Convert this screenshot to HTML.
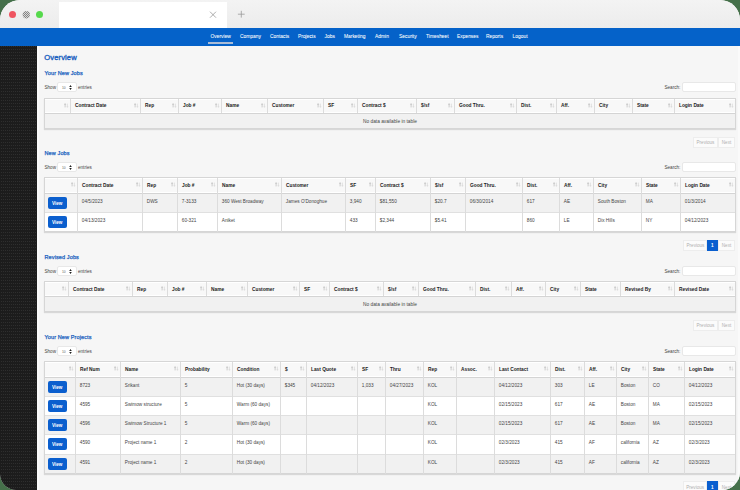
<!DOCTYPE html>
<html><head><meta charset="utf-8"><style>
html,body{margin:0;padding:0;}
body{width:740px;height:490px;overflow:hidden;background:#45704a;position:relative;font-family:"Liberation Sans",sans-serif;}
#win{position:absolute;left:0;top:0;width:740px;height:490px;border-radius:20px 20px 18px 16px;overflow:hidden;background:#f6f6f6;}
.r{position:absolute;}
.t{position:absolute;white-space:nowrap;}
</style></head><body><div id="win">

<div class="r" style="left:0px;top:0px;width:740px;height:28px;background:linear-gradient(#f3f3f3,#ececec)"></div>
<div class="r" style="left:59px;top:2px;width:168px;height:26px;background:#fff"></div>
<div class="r" style="left:9px;top:11px;width:7.3px;height:7.3px;border-radius:50%;background:#ef5561"></div>
<svg class="r" style="left:22px;top:10px" width="9" height="9"><defs><pattern id="chk" width="2" height="2" patternUnits="userSpaceOnUse"><rect width="2" height="2" fill="#d8d8d8"/><rect x="0" y="0" width="1" height="1" fill="#858585"/><rect x="1" y="1" width="1" height="1" fill="#858585"/></pattern></defs><circle cx="4.3" cy="4.7" r="3.7" fill="url(#chk)"/></svg>
<div class="r" style="left:35.8px;top:11px;width:7.3px;height:7.3px;border-radius:50%;background:#56d94c"></div>
<svg class="r" style="left:209px;top:11px" width="8" height="8" viewBox="0 0 8 8"><path d="M1 0.7L7 6.7M7 0.7L1 6.7" stroke="#8a8a8a" stroke-width="0.7"/></svg>
<svg class="r" style="left:237px;top:10px" width="8" height="8" viewBox="0 0 8 8"><path d="M4.3 0.8V7.6M0.9 4.2H7.7" stroke="#999" stroke-width="0.8"/></svg>
<div class="r" style="left:0px;top:28px;width:740px;height:18px;background:#0562c9"></div>
<div class="t" style="left:210.5px;top:32.300000000000004px;height:9.8px;line-height:9.8px;font-size:4.9px;color:#fff;font-weight:normal;-webkit-text-stroke:0.05px #fff;transform:scaleY(1.12)">Overview</div>
<div class="t" style="left:240px;top:32.300000000000004px;height:9.8px;line-height:9.8px;font-size:4.9px;color:#fff;font-weight:normal;-webkit-text-stroke:0.05px #fff;transform:scaleY(1.12)">Company</div>
<div class="t" style="left:270px;top:32.300000000000004px;height:9.8px;line-height:9.8px;font-size:4.9px;color:#fff;font-weight:normal;-webkit-text-stroke:0.05px #fff;transform:scaleY(1.12)">Contacts</div>
<div class="t" style="left:298px;top:32.300000000000004px;height:9.8px;line-height:9.8px;font-size:4.9px;color:#fff;font-weight:normal;-webkit-text-stroke:0.05px #fff;transform:scaleY(1.12)">Projects</div>
<div class="t" style="left:324.5px;top:32.300000000000004px;height:9.8px;line-height:9.8px;font-size:4.9px;color:#fff;font-weight:normal;-webkit-text-stroke:0.05px #fff;transform:scaleY(1.12)">Jobs</div>
<div class="t" style="left:344px;top:32.300000000000004px;height:9.8px;line-height:9.8px;font-size:4.9px;color:#fff;font-weight:normal;-webkit-text-stroke:0.05px #fff;transform:scaleY(1.12)">Marketing</div>
<div class="t" style="left:375px;top:32.300000000000004px;height:9.8px;line-height:9.8px;font-size:4.9px;color:#fff;font-weight:normal;-webkit-text-stroke:0.05px #fff;transform:scaleY(1.12)">Admin</div>
<div class="t" style="left:399px;top:32.300000000000004px;height:9.8px;line-height:9.8px;font-size:4.9px;color:#fff;font-weight:normal;-webkit-text-stroke:0.05px #fff;transform:scaleY(1.12)">Security</div>
<div class="t" style="left:426px;top:32.300000000000004px;height:9.8px;line-height:9.8px;font-size:4.9px;color:#fff;font-weight:normal;-webkit-text-stroke:0.05px #fff;transform:scaleY(1.12)">Timesheet</div>
<div class="t" style="left:457px;top:32.300000000000004px;height:9.8px;line-height:9.8px;font-size:4.9px;color:#fff;font-weight:normal;-webkit-text-stroke:0.05px #fff;transform:scaleY(1.12)">Expenses</div>
<div class="t" style="left:486px;top:32.300000000000004px;height:9.8px;line-height:9.8px;font-size:4.9px;color:#fff;font-weight:normal;-webkit-text-stroke:0.05px #fff;transform:scaleY(1.12)">Reports</div>
<div class="t" style="left:512.6px;top:32.300000000000004px;height:9.8px;line-height:9.8px;font-size:4.9px;color:#fff;font-weight:normal;-webkit-text-stroke:0.05px #fff;transform:scaleY(1.12)">Logout</div>
<div class="r" style="left:208px;top:42px;width:25px;height:2px;background:#aabcd6"></div>
<svg class="r" style="left:0;top:46px" width="37" height="444"><defs><pattern id="dots" width="2" height="3" patternUnits="userSpaceOnUse"><rect width="2" height="3" fill="#1c1c1c"/><rect x="1" y="0" width="1" height="1" fill="#2e2e2e"/></pattern></defs><rect width="37" height="444" fill="url(#dots)"/></svg>
<div class="r" style="left:37px;top:46px;width:2px;height:444px;background:#fafafa"></div>
<div class="r" style="left:738px;top:46px;width:2px;height:444px;background:#fafafa"></div>
<div class="t" style="left:44.3px;top:49.6px;height:15.2px;line-height:15.2px;font-size:7.6px;color:#1a5fc0;font-weight:normal;-webkit-text-stroke:0.35px #1a5fc0;letter-spacing:0.1px">Overview</div>
<div class="t" style="left:44.5px;top:67.7px;height:11.0px;line-height:11.0px;font-size:5.5px;color:#1a62c0;font-weight:normal;-webkit-text-stroke:0.25px #1a62c0;letter-spacing:0.12px">Your New Jobs</div>
<div class="t" style="left:44.5px;top:83.2px;height:9.2px;line-height:9.2px;font-size:4.6px;color:#444;font-weight:normal;">Show</div>
<div class="r" style="left:57px;top:82px;width:20px;height:10px;background:#fff;border:1px solid #e8e8e8;border-radius:2px;box-sizing:border-box"></div>
<div class="t" style="left:62px;top:84.5px;height:6.6px;line-height:6.6px;font-size:3.3px;color:#666;font-weight:normal;">10</div>
<svg class="r" style="left:69px;top:85px" width="3" height="5" viewBox="0 0 3 5"><path d="M1.5 0L2.8 2H0.2Z M1.5 5L2.8 3H0.2Z" fill="#222"/></svg>
<div class="t" style="left:78px;top:83.2px;height:9.2px;line-height:9.2px;font-size:4.6px;color:#444;font-weight:normal;">entries</div>
<div class="t" style="left:664.5px;top:83.2px;height:9.2px;line-height:9.2px;font-size:4.6px;color:#444;font-weight:normal;">Search:</div>
<div class="r" style="left:682px;top:82px;width:54px;height:10px;background:#fff;border:1px solid #e8e8e8;border-radius:2px;box-sizing:border-box"></div>
<div class="r" style="left:44px;top:98px;width:692px;height:31px;background:#f2f2f2;border:1px solid #d6d6d6;box-sizing:border-box;box-shadow:0 1px 1px rgba(0,0,0,0.12)"></div>
<div class="r" style="left:45px;top:99px;width:690px;height:14px;background:#f8f8f8;border-top:1px solid #fff;border-bottom:1px solid #fff;box-sizing:border-box"></div>
<div class="r" style="left:45px;top:113px;width:690px;height:1px;background:#d4d4d4"></div>
<div class="r" style="left:45px;top:114px;width:690px;height:14px;background:#f1f1f1"></div>
<div class="r" style="left:70px;top:99px;width:1px;height:14px;background:#dcdcdc"></div>
<div class="r" style="left:140px;top:99px;width:1px;height:14px;background:#dcdcdc"></div>
<div class="r" style="left:178px;top:99px;width:1px;height:14px;background:#dcdcdc"></div>
<div class="r" style="left:221px;top:99px;width:1px;height:14px;background:#dcdcdc"></div>
<div class="r" style="left:267px;top:99px;width:1px;height:14px;background:#dcdcdc"></div>
<div class="r" style="left:323px;top:99px;width:1px;height:14px;background:#dcdcdc"></div>
<div class="r" style="left:357px;top:99px;width:1px;height:14px;background:#dcdcdc"></div>
<div class="r" style="left:416px;top:99px;width:1px;height:14px;background:#dcdcdc"></div>
<div class="r" style="left:454px;top:99px;width:1px;height:14px;background:#dcdcdc"></div>
<div class="r" style="left:516px;top:99px;width:1px;height:14px;background:#dcdcdc"></div>
<div class="r" style="left:556px;top:99px;width:1px;height:14px;background:#dcdcdc"></div>
<div class="r" style="left:594px;top:99px;width:1px;height:14px;background:#dcdcdc"></div>
<div class="r" style="left:632px;top:99px;width:1px;height:14px;background:#dcdcdc"></div>
<div class="r" style="left:674px;top:99px;width:1px;height:14px;background:#dcdcdc"></div>
<svg class="r" style="left:64px;top:102.8px" width="5" height="5" viewBox="0 0 5 5"><path d="M1.1 4.4V0.8M0.5 1.6L1.1 0.7L1.7 1.6" stroke="#a8a8a8" stroke-width="0.55" fill="none"/><path d="M3.4 0.6V4.2M2.8 3.4L3.4 4.3L4 3.4" stroke="#cfcfcf" stroke-width="0.55" fill="none"/></svg>
<div class="t" style="left:75.0px;top:101.2px;height:9.6px;line-height:9.6px;font-size:4.8px;color:#222;font-weight:bold;">Contract Date</div>
<svg class="r" style="left:134px;top:102.8px" width="5" height="5" viewBox="0 0 5 5"><path d="M1.1 4.4V0.8M0.5 1.6L1.1 0.7L1.7 1.6" stroke="#a8a8a8" stroke-width="0.55" fill="none"/><path d="M3.4 0.6V4.2M2.8 3.4L3.4 4.3L4 3.4" stroke="#cfcfcf" stroke-width="0.55" fill="none"/></svg>
<div class="t" style="left:145.0px;top:101.2px;height:9.6px;line-height:9.6px;font-size:4.8px;color:#222;font-weight:bold;">Rep</div>
<svg class="r" style="left:172px;top:102.8px" width="5" height="5" viewBox="0 0 5 5"><path d="M1.1 4.4V0.8M0.5 1.6L1.1 0.7L1.7 1.6" stroke="#a8a8a8" stroke-width="0.55" fill="none"/><path d="M3.4 0.6V4.2M2.8 3.4L3.4 4.3L4 3.4" stroke="#cfcfcf" stroke-width="0.55" fill="none"/></svg>
<div class="t" style="left:183.0px;top:101.2px;height:9.6px;line-height:9.6px;font-size:4.8px;color:#222;font-weight:bold;">Job #</div>
<svg class="r" style="left:215px;top:102.8px" width="5" height="5" viewBox="0 0 5 5"><path d="M1.1 4.4V0.8M0.5 1.6L1.1 0.7L1.7 1.6" stroke="#a8a8a8" stroke-width="0.55" fill="none"/><path d="M3.4 0.6V4.2M2.8 3.4L3.4 4.3L4 3.4" stroke="#cfcfcf" stroke-width="0.55" fill="none"/></svg>
<div class="t" style="left:226.0px;top:101.2px;height:9.6px;line-height:9.6px;font-size:4.8px;color:#222;font-weight:bold;">Name</div>
<svg class="r" style="left:261px;top:102.8px" width="5" height="5" viewBox="0 0 5 5"><path d="M1.1 4.4V0.8M0.5 1.6L1.1 0.7L1.7 1.6" stroke="#a8a8a8" stroke-width="0.55" fill="none"/><path d="M3.4 0.6V4.2M2.8 3.4L3.4 4.3L4 3.4" stroke="#cfcfcf" stroke-width="0.55" fill="none"/></svg>
<div class="t" style="left:272.0px;top:101.2px;height:9.6px;line-height:9.6px;font-size:4.8px;color:#222;font-weight:bold;">Customer</div>
<svg class="r" style="left:317px;top:102.8px" width="5" height="5" viewBox="0 0 5 5"><path d="M1.1 4.4V0.8M0.5 1.6L1.1 0.7L1.7 1.6" stroke="#a8a8a8" stroke-width="0.55" fill="none"/><path d="M3.4 0.6V4.2M2.8 3.4L3.4 4.3L4 3.4" stroke="#cfcfcf" stroke-width="0.55" fill="none"/></svg>
<div class="t" style="left:328.0px;top:101.2px;height:9.6px;line-height:9.6px;font-size:4.8px;color:#222;font-weight:bold;">SF</div>
<svg class="r" style="left:351px;top:102.8px" width="5" height="5" viewBox="0 0 5 5"><path d="M1.1 4.4V0.8M0.5 1.6L1.1 0.7L1.7 1.6" stroke="#a8a8a8" stroke-width="0.55" fill="none"/><path d="M3.4 0.6V4.2M2.8 3.4L3.4 4.3L4 3.4" stroke="#cfcfcf" stroke-width="0.55" fill="none"/></svg>
<div class="t" style="left:362.0px;top:101.2px;height:9.6px;line-height:9.6px;font-size:4.8px;color:#222;font-weight:bold;">Contract $</div>
<svg class="r" style="left:410px;top:102.8px" width="5" height="5" viewBox="0 0 5 5"><path d="M1.1 4.4V0.8M0.5 1.6L1.1 0.7L1.7 1.6" stroke="#a8a8a8" stroke-width="0.55" fill="none"/><path d="M3.4 0.6V4.2M2.8 3.4L3.4 4.3L4 3.4" stroke="#cfcfcf" stroke-width="0.55" fill="none"/></svg>
<div class="t" style="left:421.0px;top:101.2px;height:9.6px;line-height:9.6px;font-size:4.8px;color:#222;font-weight:bold;">$/sf</div>
<svg class="r" style="left:448px;top:102.8px" width="5" height="5" viewBox="0 0 5 5"><path d="M1.1 4.4V0.8M0.5 1.6L1.1 0.7L1.7 1.6" stroke="#a8a8a8" stroke-width="0.55" fill="none"/><path d="M3.4 0.6V4.2M2.8 3.4L3.4 4.3L4 3.4" stroke="#cfcfcf" stroke-width="0.55" fill="none"/></svg>
<div class="t" style="left:459.0px;top:101.2px;height:9.6px;line-height:9.6px;font-size:4.8px;color:#222;font-weight:bold;">Good Thru.</div>
<svg class="r" style="left:510px;top:102.8px" width="5" height="5" viewBox="0 0 5 5"><path d="M1.1 4.4V0.8M0.5 1.6L1.1 0.7L1.7 1.6" stroke="#a8a8a8" stroke-width="0.55" fill="none"/><path d="M3.4 0.6V4.2M2.8 3.4L3.4 4.3L4 3.4" stroke="#cfcfcf" stroke-width="0.55" fill="none"/></svg>
<div class="t" style="left:521.0px;top:101.2px;height:9.6px;line-height:9.6px;font-size:4.8px;color:#222;font-weight:bold;">Dist.</div>
<svg class="r" style="left:550px;top:102.8px" width="5" height="5" viewBox="0 0 5 5"><path d="M1.1 4.4V0.8M0.5 1.6L1.1 0.7L1.7 1.6" stroke="#a8a8a8" stroke-width="0.55" fill="none"/><path d="M3.4 0.6V4.2M2.8 3.4L3.4 4.3L4 3.4" stroke="#cfcfcf" stroke-width="0.55" fill="none"/></svg>
<div class="t" style="left:561.0px;top:101.2px;height:9.6px;line-height:9.6px;font-size:4.8px;color:#222;font-weight:bold;">Aff.</div>
<svg class="r" style="left:588px;top:102.8px" width="5" height="5" viewBox="0 0 5 5"><path d="M1.1 4.4V0.8M0.5 1.6L1.1 0.7L1.7 1.6" stroke="#a8a8a8" stroke-width="0.55" fill="none"/><path d="M3.4 0.6V4.2M2.8 3.4L3.4 4.3L4 3.4" stroke="#cfcfcf" stroke-width="0.55" fill="none"/></svg>
<div class="t" style="left:599.0px;top:101.2px;height:9.6px;line-height:9.6px;font-size:4.8px;color:#222;font-weight:bold;">City</div>
<svg class="r" style="left:626px;top:102.8px" width="5" height="5" viewBox="0 0 5 5"><path d="M1.1 4.4V0.8M0.5 1.6L1.1 0.7L1.7 1.6" stroke="#a8a8a8" stroke-width="0.55" fill="none"/><path d="M3.4 0.6V4.2M2.8 3.4L3.4 4.3L4 3.4" stroke="#cfcfcf" stroke-width="0.55" fill="none"/></svg>
<div class="t" style="left:637.0px;top:101.2px;height:9.6px;line-height:9.6px;font-size:4.8px;color:#222;font-weight:bold;">State</div>
<svg class="r" style="left:668px;top:102.8px" width="5" height="5" viewBox="0 0 5 5"><path d="M1.1 4.4V0.8M0.5 1.6L1.1 0.7L1.7 1.6" stroke="#a8a8a8" stroke-width="0.55" fill="none"/><path d="M3.4 0.6V4.2M2.8 3.4L3.4 4.3L4 3.4" stroke="#cfcfcf" stroke-width="0.55" fill="none"/></svg>
<div class="t" style="left:679.0px;top:101.2px;height:9.6px;line-height:9.6px;font-size:4.8px;color:#222;font-weight:bold;">Login Date</div>
<svg class="r" style="left:729px;top:102.8px" width="5" height="5" viewBox="0 0 5 5"><path d="M1.1 4.4V0.8M0.5 1.6L1.1 0.7L1.7 1.6" stroke="#a8a8a8" stroke-width="0.55" fill="none"/><path d="M3.4 0.6V4.2M2.8 3.4L3.4 4.3L4 3.4" stroke="#cfcfcf" stroke-width="0.55" fill="none"/></svg>
<div class="t" style="left:363.0px;top:117.0px;height:9.6px;line-height:9.6px;font-size:4.8px;color:#444;font-weight:normal;">No data available in table</div>
<div class="r" style="left:693px;top:137px;width:25px;height:11px;background:#fbfbfb;border:1px solid #ededed;box-sizing:border-box"></div>
<div class="t" style="left:696.5px;top:138.4px;height:9.2px;line-height:9.2px;font-size:4.6px;color:#b0b0b0;font-weight:normal;">Previous</div>
<div class="r" style="left:718px;top:137px;width:17px;height:11px;background:#fbfbfb;border:1px solid #ededed;box-sizing:border-box"></div>
<div class="t" style="left:721.8px;top:138.4px;height:9.2px;line-height:9.2px;font-size:4.6px;color:#b0b0b0;font-weight:normal;">Next</div>
<div class="t" style="left:44.5px;top:148.0px;height:11.0px;line-height:11.0px;font-size:5.5px;color:#1a62c0;font-weight:normal;-webkit-text-stroke:0.25px #1a62c0;letter-spacing:0.12px">New Jobs</div>
<div class="t" style="left:44.5px;top:163.20000000000002px;height:9.2px;line-height:9.2px;font-size:4.6px;color:#444;font-weight:normal;">Show</div>
<div class="r" style="left:57px;top:162px;width:20px;height:10px;background:#fff;border:1px solid #e8e8e8;border-radius:2px;box-sizing:border-box"></div>
<div class="t" style="left:62px;top:164.5px;height:6.6px;line-height:6.6px;font-size:3.3px;color:#666;font-weight:normal;">10</div>
<svg class="r" style="left:69px;top:165px" width="3" height="5" viewBox="0 0 3 5"><path d="M1.5 0L2.8 2H0.2Z M1.5 5L2.8 3H0.2Z" fill="#222"/></svg>
<div class="t" style="left:78px;top:163.20000000000002px;height:9.2px;line-height:9.2px;font-size:4.6px;color:#444;font-weight:normal;">entries</div>
<div class="t" style="left:664.5px;top:163.20000000000002px;height:9.2px;line-height:9.2px;font-size:4.6px;color:#444;font-weight:normal;">Search:</div>
<div class="r" style="left:682px;top:162px;width:54px;height:10px;background:#fff;border:1px solid #e8e8e8;border-radius:2px;box-sizing:border-box"></div>
<div class="r" style="left:44px;top:177px;width:692px;height:55px;background:#f2f2f2;border:1px solid #d6d6d6;box-sizing:border-box;box-shadow:0 1px 1px rgba(0,0,0,0.12)"></div>
<div class="r" style="left:45px;top:178px;width:690px;height:15px;background:#f8f8f8;border-top:1px solid #fff;border-bottom:1px solid #fff;box-sizing:border-box"></div>
<div class="r" style="left:45px;top:193px;width:690px;height:1px;background:#d4d4d4"></div>
<div class="r" style="left:45px;top:194px;width:690px;height:18px;background:#f1f1f1"></div>
<div class="r" style="left:45px;top:212px;width:690px;height:1px;background:#e0e0e0"></div>
<div class="r" style="left:45px;top:213px;width:690px;height:18px;background:#ffffff"></div>
<div class="r" style="left:77px;top:178px;width:1px;height:54px;background:#dcdcdc"></div>
<div class="r" style="left:142px;top:178px;width:1px;height:54px;background:#dcdcdc"></div>
<div class="r" style="left:177px;top:178px;width:1px;height:54px;background:#dcdcdc"></div>
<div class="r" style="left:217px;top:178px;width:1px;height:54px;background:#dcdcdc"></div>
<div class="r" style="left:281px;top:178px;width:1px;height:54px;background:#dcdcdc"></div>
<div class="r" style="left:345px;top:178px;width:1px;height:54px;background:#dcdcdc"></div>
<div class="r" style="left:375px;top:178px;width:1px;height:54px;background:#dcdcdc"></div>
<div class="r" style="left:430px;top:178px;width:1px;height:54px;background:#dcdcdc"></div>
<div class="r" style="left:465px;top:178px;width:1px;height:54px;background:#dcdcdc"></div>
<div class="r" style="left:522px;top:178px;width:1px;height:54px;background:#dcdcdc"></div>
<div class="r" style="left:559px;top:178px;width:1px;height:54px;background:#dcdcdc"></div>
<div class="r" style="left:593px;top:178px;width:1px;height:54px;background:#dcdcdc"></div>
<div class="r" style="left:641px;top:178px;width:1px;height:54px;background:#dcdcdc"></div>
<div class="r" style="left:680px;top:178px;width:1px;height:54px;background:#dcdcdc"></div>
<svg class="r" style="left:71px;top:181.8px" width="5" height="5" viewBox="0 0 5 5"><path d="M1.1 4.4V0.8M0.5 1.6L1.1 0.7L1.7 1.6" stroke="#a8a8a8" stroke-width="0.55" fill="none"/><path d="M3.4 0.6V4.2M2.8 3.4L3.4 4.3L4 3.4" stroke="#cfcfcf" stroke-width="0.55" fill="none"/></svg>
<div class="t" style="left:82.0px;top:180.95px;height:9.6px;line-height:9.6px;font-size:4.8px;color:#222;font-weight:bold;">Contract Date</div>
<svg class="r" style="left:136px;top:181.8px" width="5" height="5" viewBox="0 0 5 5"><path d="M1.1 4.4V0.8M0.5 1.6L1.1 0.7L1.7 1.6" stroke="#a8a8a8" stroke-width="0.55" fill="none"/><path d="M3.4 0.6V4.2M2.8 3.4L3.4 4.3L4 3.4" stroke="#cfcfcf" stroke-width="0.55" fill="none"/></svg>
<div class="t" style="left:147.0px;top:180.95px;height:9.6px;line-height:9.6px;font-size:4.8px;color:#222;font-weight:bold;">Rep</div>
<svg class="r" style="left:171px;top:181.8px" width="5" height="5" viewBox="0 0 5 5"><path d="M1.1 4.4V0.8M0.5 1.6L1.1 0.7L1.7 1.6" stroke="#a8a8a8" stroke-width="0.55" fill="none"/><path d="M3.4 0.6V4.2M2.8 3.4L3.4 4.3L4 3.4" stroke="#cfcfcf" stroke-width="0.55" fill="none"/></svg>
<div class="t" style="left:182.0px;top:180.95px;height:9.6px;line-height:9.6px;font-size:4.8px;color:#222;font-weight:bold;">Job #</div>
<svg class="r" style="left:211px;top:181.8px" width="5" height="5" viewBox="0 0 5 5"><path d="M1.1 4.4V0.8M0.5 1.6L1.1 0.7L1.7 1.6" stroke="#a8a8a8" stroke-width="0.55" fill="none"/><path d="M3.4 0.6V4.2M2.8 3.4L3.4 4.3L4 3.4" stroke="#cfcfcf" stroke-width="0.55" fill="none"/></svg>
<div class="t" style="left:222.0px;top:180.95px;height:9.6px;line-height:9.6px;font-size:4.8px;color:#222;font-weight:bold;">Name</div>
<svg class="r" style="left:275px;top:181.8px" width="5" height="5" viewBox="0 0 5 5"><path d="M1.1 4.4V0.8M0.5 1.6L1.1 0.7L1.7 1.6" stroke="#a8a8a8" stroke-width="0.55" fill="none"/><path d="M3.4 0.6V4.2M2.8 3.4L3.4 4.3L4 3.4" stroke="#cfcfcf" stroke-width="0.55" fill="none"/></svg>
<div class="t" style="left:286.0px;top:180.95px;height:9.6px;line-height:9.6px;font-size:4.8px;color:#222;font-weight:bold;">Customer</div>
<svg class="r" style="left:339px;top:181.8px" width="5" height="5" viewBox="0 0 5 5"><path d="M1.1 4.4V0.8M0.5 1.6L1.1 0.7L1.7 1.6" stroke="#a8a8a8" stroke-width="0.55" fill="none"/><path d="M3.4 0.6V4.2M2.8 3.4L3.4 4.3L4 3.4" stroke="#cfcfcf" stroke-width="0.55" fill="none"/></svg>
<div class="t" style="left:350.0px;top:180.95px;height:9.6px;line-height:9.6px;font-size:4.8px;color:#222;font-weight:bold;">SF</div>
<svg class="r" style="left:369px;top:181.8px" width="5" height="5" viewBox="0 0 5 5"><path d="M1.1 4.4V0.8M0.5 1.6L1.1 0.7L1.7 1.6" stroke="#a8a8a8" stroke-width="0.55" fill="none"/><path d="M3.4 0.6V4.2M2.8 3.4L3.4 4.3L4 3.4" stroke="#cfcfcf" stroke-width="0.55" fill="none"/></svg>
<div class="t" style="left:380.0px;top:180.95px;height:9.6px;line-height:9.6px;font-size:4.8px;color:#222;font-weight:bold;">Contract $</div>
<svg class="r" style="left:424px;top:181.8px" width="5" height="5" viewBox="0 0 5 5"><path d="M1.1 4.4V0.8M0.5 1.6L1.1 0.7L1.7 1.6" stroke="#a8a8a8" stroke-width="0.55" fill="none"/><path d="M3.4 0.6V4.2M2.8 3.4L3.4 4.3L4 3.4" stroke="#cfcfcf" stroke-width="0.55" fill="none"/></svg>
<div class="t" style="left:435.0px;top:180.95px;height:9.6px;line-height:9.6px;font-size:4.8px;color:#222;font-weight:bold;">$/sf</div>
<svg class="r" style="left:459px;top:181.8px" width="5" height="5" viewBox="0 0 5 5"><path d="M1.1 4.4V0.8M0.5 1.6L1.1 0.7L1.7 1.6" stroke="#a8a8a8" stroke-width="0.55" fill="none"/><path d="M3.4 0.6V4.2M2.8 3.4L3.4 4.3L4 3.4" stroke="#cfcfcf" stroke-width="0.55" fill="none"/></svg>
<div class="t" style="left:470.0px;top:180.95px;height:9.6px;line-height:9.6px;font-size:4.8px;color:#222;font-weight:bold;">Good Thru.</div>
<svg class="r" style="left:516px;top:181.8px" width="5" height="5" viewBox="0 0 5 5"><path d="M1.1 4.4V0.8M0.5 1.6L1.1 0.7L1.7 1.6" stroke="#a8a8a8" stroke-width="0.55" fill="none"/><path d="M3.4 0.6V4.2M2.8 3.4L3.4 4.3L4 3.4" stroke="#cfcfcf" stroke-width="0.55" fill="none"/></svg>
<div class="t" style="left:527.0px;top:180.95px;height:9.6px;line-height:9.6px;font-size:4.8px;color:#222;font-weight:bold;">Dist.</div>
<svg class="r" style="left:553px;top:181.8px" width="5" height="5" viewBox="0 0 5 5"><path d="M1.1 4.4V0.8M0.5 1.6L1.1 0.7L1.7 1.6" stroke="#a8a8a8" stroke-width="0.55" fill="none"/><path d="M3.4 0.6V4.2M2.8 3.4L3.4 4.3L4 3.4" stroke="#cfcfcf" stroke-width="0.55" fill="none"/></svg>
<div class="t" style="left:564.0px;top:180.95px;height:9.6px;line-height:9.6px;font-size:4.8px;color:#222;font-weight:bold;">Aff.</div>
<svg class="r" style="left:587px;top:181.8px" width="5" height="5" viewBox="0 0 5 5"><path d="M1.1 4.4V0.8M0.5 1.6L1.1 0.7L1.7 1.6" stroke="#a8a8a8" stroke-width="0.55" fill="none"/><path d="M3.4 0.6V4.2M2.8 3.4L3.4 4.3L4 3.4" stroke="#cfcfcf" stroke-width="0.55" fill="none"/></svg>
<div class="t" style="left:598.0px;top:180.95px;height:9.6px;line-height:9.6px;font-size:4.8px;color:#222;font-weight:bold;">City</div>
<svg class="r" style="left:635px;top:181.8px" width="5" height="5" viewBox="0 0 5 5"><path d="M1.1 4.4V0.8M0.5 1.6L1.1 0.7L1.7 1.6" stroke="#a8a8a8" stroke-width="0.55" fill="none"/><path d="M3.4 0.6V4.2M2.8 3.4L3.4 4.3L4 3.4" stroke="#cfcfcf" stroke-width="0.55" fill="none"/></svg>
<div class="t" style="left:646.0px;top:180.95px;height:9.6px;line-height:9.6px;font-size:4.8px;color:#222;font-weight:bold;">State</div>
<svg class="r" style="left:674px;top:181.8px" width="5" height="5" viewBox="0 0 5 5"><path d="M1.1 4.4V0.8M0.5 1.6L1.1 0.7L1.7 1.6" stroke="#a8a8a8" stroke-width="0.55" fill="none"/><path d="M3.4 0.6V4.2M2.8 3.4L3.4 4.3L4 3.4" stroke="#cfcfcf" stroke-width="0.55" fill="none"/></svg>
<div class="t" style="left:685.0px;top:180.95px;height:9.6px;line-height:9.6px;font-size:4.8px;color:#222;font-weight:bold;">Login Date</div>
<svg class="r" style="left:729px;top:181.8px" width="5" height="5" viewBox="0 0 5 5"><path d="M1.1 4.4V0.8M0.5 1.6L1.1 0.7L1.7 1.6" stroke="#a8a8a8" stroke-width="0.55" fill="none"/><path d="M3.4 0.6V4.2M2.8 3.4L3.4 4.3L4 3.4" stroke="#cfcfcf" stroke-width="0.55" fill="none"/></svg>
<div class="r" style="left:48px;top:197px;width:19px;height:12px;background:#0b5fce;border-radius:2px"></div>
<div class="t" style="left:52px;top:198.6px;height:9.2px;line-height:9.2px;font-size:4.6px;color:#fff;font-weight:bold;transform:scaleY(1.1)">View</div>
<div class="t" style="left:81.8px;top:197.20000000000002px;height:9.4px;line-height:9.4px;font-size:4.7px;color:#444;font-weight:normal;transform:scaleY(1.18)">04/5/2023</div>
<div class="t" style="left:146.8px;top:197.20000000000002px;height:9.4px;line-height:9.4px;font-size:4.7px;color:#444;font-weight:normal;transform:scaleY(1.18)">DWS</div>
<div class="t" style="left:181.8px;top:197.20000000000002px;height:9.4px;line-height:9.4px;font-size:4.7px;color:#444;font-weight:normal;transform:scaleY(1.18)">7-3133</div>
<div class="t" style="left:221.8px;top:197.20000000000002px;height:9.4px;line-height:9.4px;font-size:4.7px;color:#444;font-weight:normal;transform:scaleY(1.18)">360 West Broadway</div>
<div class="t" style="left:285.8px;top:197.20000000000002px;height:9.4px;line-height:9.4px;font-size:4.7px;color:#444;font-weight:normal;transform:scaleY(1.18)">James O'Donoghue</div>
<div class="t" style="left:349.8px;top:197.20000000000002px;height:9.4px;line-height:9.4px;font-size:4.7px;color:#444;font-weight:normal;transform:scaleY(1.18)">3,940</div>
<div class="t" style="left:379.8px;top:197.20000000000002px;height:9.4px;line-height:9.4px;font-size:4.7px;color:#444;font-weight:normal;transform:scaleY(1.18)">$81,550</div>
<div class="t" style="left:434.8px;top:197.20000000000002px;height:9.4px;line-height:9.4px;font-size:4.7px;color:#444;font-weight:normal;transform:scaleY(1.18)">$20.7</div>
<div class="t" style="left:469.8px;top:197.20000000000002px;height:9.4px;line-height:9.4px;font-size:4.7px;color:#444;font-weight:normal;transform:scaleY(1.18)">06/30/2014</div>
<div class="t" style="left:526.8px;top:197.20000000000002px;height:9.4px;line-height:9.4px;font-size:4.7px;color:#444;font-weight:normal;transform:scaleY(1.18)">617</div>
<div class="t" style="left:563.8px;top:197.20000000000002px;height:9.4px;line-height:9.4px;font-size:4.7px;color:#444;font-weight:normal;transform:scaleY(1.18)">AE</div>
<div class="t" style="left:597.8px;top:197.20000000000002px;height:9.4px;line-height:9.4px;font-size:4.7px;color:#444;font-weight:normal;transform:scaleY(1.18)">South Boston</div>
<div class="t" style="left:645.8px;top:197.20000000000002px;height:9.4px;line-height:9.4px;font-size:4.7px;color:#444;font-weight:normal;transform:scaleY(1.18)">MA</div>
<div class="t" style="left:684.8px;top:197.20000000000002px;height:9.4px;line-height:9.4px;font-size:4.7px;color:#444;font-weight:normal;transform:scaleY(1.18)">01/3/2014</div>
<div class="r" style="left:48px;top:216px;width:19px;height:12px;background:#0b5fce;border-radius:2px"></div>
<div class="t" style="left:52px;top:217.6px;height:9.2px;line-height:9.2px;font-size:4.6px;color:#fff;font-weight:bold;transform:scaleY(1.1)">View</div>
<div class="t" style="left:81.8px;top:216.20000000000002px;height:9.4px;line-height:9.4px;font-size:4.7px;color:#444;font-weight:normal;transform:scaleY(1.18)">04/13/2023</div>
<div class="t" style="left:181.8px;top:216.20000000000002px;height:9.4px;line-height:9.4px;font-size:4.7px;color:#444;font-weight:normal;transform:scaleY(1.18)">60-321</div>
<div class="t" style="left:221.8px;top:216.20000000000002px;height:9.4px;line-height:9.4px;font-size:4.7px;color:#444;font-weight:normal;transform:scaleY(1.18)">Aniket</div>
<div class="t" style="left:349.8px;top:216.20000000000002px;height:9.4px;line-height:9.4px;font-size:4.7px;color:#444;font-weight:normal;transform:scaleY(1.18)">433</div>
<div class="t" style="left:379.8px;top:216.20000000000002px;height:9.4px;line-height:9.4px;font-size:4.7px;color:#444;font-weight:normal;transform:scaleY(1.18)">$2,344</div>
<div class="t" style="left:434.8px;top:216.20000000000002px;height:9.4px;line-height:9.4px;font-size:4.7px;color:#444;font-weight:normal;transform:scaleY(1.18)">$5.41</div>
<div class="t" style="left:526.8px;top:216.20000000000002px;height:9.4px;line-height:9.4px;font-size:4.7px;color:#444;font-weight:normal;transform:scaleY(1.18)">860</div>
<div class="t" style="left:563.8px;top:216.20000000000002px;height:9.4px;line-height:9.4px;font-size:4.7px;color:#444;font-weight:normal;transform:scaleY(1.18)">LE</div>
<div class="t" style="left:597.8px;top:216.20000000000002px;height:9.4px;line-height:9.4px;font-size:4.7px;color:#444;font-weight:normal;transform:scaleY(1.18)">Dix Hills</div>
<div class="t" style="left:645.8px;top:216.20000000000002px;height:9.4px;line-height:9.4px;font-size:4.7px;color:#444;font-weight:normal;transform:scaleY(1.18)">NY</div>
<div class="t" style="left:684.8px;top:216.20000000000002px;height:9.4px;line-height:9.4px;font-size:4.7px;color:#444;font-weight:normal;transform:scaleY(1.18)">04/12/2023</div>
<div class="r" style="left:683px;top:240px;width:24px;height:11px;background:#fbfbfb;border:1px solid #ededed;box-sizing:border-box"></div>
<div class="t" style="left:686.5px;top:241.4px;height:9.2px;line-height:9.2px;font-size:4.6px;color:#b0b0b0;font-weight:normal;">Previous</div>
<div class="r" style="left:707px;top:240px;width:11px;height:11px;background:#0a5fcf"></div>
<div class="t" style="left:711px;top:241.4px;height:9.2px;line-height:9.2px;font-size:4.6px;color:#fff;font-weight:bold;">1</div>
<div class="r" style="left:718px;top:240px;width:17px;height:11px;background:#fbfbfb;border:1px solid #ededed;box-sizing:border-box"></div>
<div class="t" style="left:721.8px;top:241.4px;height:9.2px;line-height:9.2px;font-size:4.6px;color:#b0b0b0;font-weight:normal;">Next</div>
<div class="t" style="left:44.5px;top:251.89999999999998px;height:11.0px;line-height:11.0px;font-size:5.5px;color:#1a62c0;font-weight:normal;-webkit-text-stroke:0.25px #1a62c0;letter-spacing:0.12px">Revised Jobs</div>
<div class="t" style="left:44.5px;top:267.2px;height:9.2px;line-height:9.2px;font-size:4.6px;color:#444;font-weight:normal;">Show</div>
<div class="r" style="left:57px;top:266px;width:20px;height:10px;background:#fff;border:1px solid #e8e8e8;border-radius:2px;box-sizing:border-box"></div>
<div class="t" style="left:62px;top:268.5px;height:6.6px;line-height:6.6px;font-size:3.3px;color:#666;font-weight:normal;">10</div>
<svg class="r" style="left:69px;top:269px" width="3" height="5" viewBox="0 0 3 5"><path d="M1.5 0L2.8 2H0.2Z M1.5 5L2.8 3H0.2Z" fill="#222"/></svg>
<div class="t" style="left:78px;top:267.2px;height:9.2px;line-height:9.2px;font-size:4.6px;color:#444;font-weight:normal;">entries</div>
<div class="t" style="left:664.5px;top:267.2px;height:9.2px;line-height:9.2px;font-size:4.6px;color:#444;font-weight:normal;">Search:</div>
<div class="r" style="left:682px;top:266px;width:54px;height:10px;background:#fff;border:1px solid #e8e8e8;border-radius:2px;box-sizing:border-box"></div>
<div class="r" style="left:44px;top:281px;width:692px;height:31px;background:#f2f2f2;border:1px solid #d6d6d6;box-sizing:border-box;box-shadow:0 1px 1px rgba(0,0,0,0.12)"></div>
<div class="r" style="left:45px;top:282px;width:690px;height:14px;background:#f8f8f8;border-top:1px solid #fff;border-bottom:1px solid #fff;box-sizing:border-box"></div>
<div class="r" style="left:45px;top:296px;width:690px;height:1px;background:#d4d4d4"></div>
<div class="r" style="left:45px;top:297px;width:690px;height:14px;background:#f1f1f1"></div>
<div class="r" style="left:68px;top:282px;width:1px;height:14px;background:#dcdcdc"></div>
<div class="r" style="left:132px;top:282px;width:1px;height:14px;background:#dcdcdc"></div>
<div class="r" style="left:167px;top:282px;width:1px;height:14px;background:#dcdcdc"></div>
<div class="r" style="left:206px;top:282px;width:1px;height:14px;background:#dcdcdc"></div>
<div class="r" style="left:247px;top:282px;width:1px;height:14px;background:#dcdcdc"></div>
<div class="r" style="left:299px;top:282px;width:1px;height:14px;background:#dcdcdc"></div>
<div class="r" style="left:329px;top:282px;width:1px;height:14px;background:#dcdcdc"></div>
<div class="r" style="left:383px;top:282px;width:1px;height:14px;background:#dcdcdc"></div>
<div class="r" style="left:418px;top:282px;width:1px;height:14px;background:#dcdcdc"></div>
<div class="r" style="left:475px;top:282px;width:1px;height:14px;background:#dcdcdc"></div>
<div class="r" style="left:511px;top:282px;width:1px;height:14px;background:#dcdcdc"></div>
<div class="r" style="left:545px;top:282px;width:1px;height:14px;background:#dcdcdc"></div>
<div class="r" style="left:580px;top:282px;width:1px;height:14px;background:#dcdcdc"></div>
<div class="r" style="left:620px;top:282px;width:1px;height:14px;background:#dcdcdc"></div>
<div class="r" style="left:674px;top:282px;width:1px;height:14px;background:#dcdcdc"></div>
<svg class="r" style="left:62px;top:285.8px" width="5" height="5" viewBox="0 0 5 5"><path d="M1.1 4.4V0.8M0.5 1.6L1.1 0.7L1.7 1.6" stroke="#a8a8a8" stroke-width="0.55" fill="none"/><path d="M3.4 0.6V4.2M2.8 3.4L3.4 4.3L4 3.4" stroke="#cfcfcf" stroke-width="0.55" fill="none"/></svg>
<div class="t" style="left:73.0px;top:285.29999999999995px;height:9.6px;line-height:9.6px;font-size:4.8px;color:#222;font-weight:bold;">Contract Date</div>
<svg class="r" style="left:126px;top:285.8px" width="5" height="5" viewBox="0 0 5 5"><path d="M1.1 4.4V0.8M0.5 1.6L1.1 0.7L1.7 1.6" stroke="#a8a8a8" stroke-width="0.55" fill="none"/><path d="M3.4 0.6V4.2M2.8 3.4L3.4 4.3L4 3.4" stroke="#cfcfcf" stroke-width="0.55" fill="none"/></svg>
<div class="t" style="left:137.0px;top:285.29999999999995px;height:9.6px;line-height:9.6px;font-size:4.8px;color:#222;font-weight:bold;">Rep</div>
<svg class="r" style="left:161px;top:285.8px" width="5" height="5" viewBox="0 0 5 5"><path d="M1.1 4.4V0.8M0.5 1.6L1.1 0.7L1.7 1.6" stroke="#a8a8a8" stroke-width="0.55" fill="none"/><path d="M3.4 0.6V4.2M2.8 3.4L3.4 4.3L4 3.4" stroke="#cfcfcf" stroke-width="0.55" fill="none"/></svg>
<div class="t" style="left:172.0px;top:285.29999999999995px;height:9.6px;line-height:9.6px;font-size:4.8px;color:#222;font-weight:bold;">Job #</div>
<svg class="r" style="left:200px;top:285.8px" width="5" height="5" viewBox="0 0 5 5"><path d="M1.1 4.4V0.8M0.5 1.6L1.1 0.7L1.7 1.6" stroke="#a8a8a8" stroke-width="0.55" fill="none"/><path d="M3.4 0.6V4.2M2.8 3.4L3.4 4.3L4 3.4" stroke="#cfcfcf" stroke-width="0.55" fill="none"/></svg>
<div class="t" style="left:211.0px;top:285.29999999999995px;height:9.6px;line-height:9.6px;font-size:4.8px;color:#222;font-weight:bold;">Name</div>
<svg class="r" style="left:241px;top:285.8px" width="5" height="5" viewBox="0 0 5 5"><path d="M1.1 4.4V0.8M0.5 1.6L1.1 0.7L1.7 1.6" stroke="#a8a8a8" stroke-width="0.55" fill="none"/><path d="M3.4 0.6V4.2M2.8 3.4L3.4 4.3L4 3.4" stroke="#cfcfcf" stroke-width="0.55" fill="none"/></svg>
<div class="t" style="left:252.0px;top:285.29999999999995px;height:9.6px;line-height:9.6px;font-size:4.8px;color:#222;font-weight:bold;">Customer</div>
<svg class="r" style="left:293px;top:285.8px" width="5" height="5" viewBox="0 0 5 5"><path d="M1.1 4.4V0.8M0.5 1.6L1.1 0.7L1.7 1.6" stroke="#a8a8a8" stroke-width="0.55" fill="none"/><path d="M3.4 0.6V4.2M2.8 3.4L3.4 4.3L4 3.4" stroke="#cfcfcf" stroke-width="0.55" fill="none"/></svg>
<div class="t" style="left:304.0px;top:285.29999999999995px;height:9.6px;line-height:9.6px;font-size:4.8px;color:#222;font-weight:bold;">SF</div>
<svg class="r" style="left:323px;top:285.8px" width="5" height="5" viewBox="0 0 5 5"><path d="M1.1 4.4V0.8M0.5 1.6L1.1 0.7L1.7 1.6" stroke="#a8a8a8" stroke-width="0.55" fill="none"/><path d="M3.4 0.6V4.2M2.8 3.4L3.4 4.3L4 3.4" stroke="#cfcfcf" stroke-width="0.55" fill="none"/></svg>
<div class="t" style="left:334.0px;top:285.29999999999995px;height:9.6px;line-height:9.6px;font-size:4.8px;color:#222;font-weight:bold;">Contract $</div>
<svg class="r" style="left:377px;top:285.8px" width="5" height="5" viewBox="0 0 5 5"><path d="M1.1 4.4V0.8M0.5 1.6L1.1 0.7L1.7 1.6" stroke="#a8a8a8" stroke-width="0.55" fill="none"/><path d="M3.4 0.6V4.2M2.8 3.4L3.4 4.3L4 3.4" stroke="#cfcfcf" stroke-width="0.55" fill="none"/></svg>
<div class="t" style="left:388.0px;top:285.29999999999995px;height:9.6px;line-height:9.6px;font-size:4.8px;color:#222;font-weight:bold;">$/sf</div>
<svg class="r" style="left:412px;top:285.8px" width="5" height="5" viewBox="0 0 5 5"><path d="M1.1 4.4V0.8M0.5 1.6L1.1 0.7L1.7 1.6" stroke="#a8a8a8" stroke-width="0.55" fill="none"/><path d="M3.4 0.6V4.2M2.8 3.4L3.4 4.3L4 3.4" stroke="#cfcfcf" stroke-width="0.55" fill="none"/></svg>
<div class="t" style="left:423.0px;top:285.29999999999995px;height:9.6px;line-height:9.6px;font-size:4.8px;color:#222;font-weight:bold;">Good Thru.</div>
<svg class="r" style="left:469px;top:285.8px" width="5" height="5" viewBox="0 0 5 5"><path d="M1.1 4.4V0.8M0.5 1.6L1.1 0.7L1.7 1.6" stroke="#a8a8a8" stroke-width="0.55" fill="none"/><path d="M3.4 0.6V4.2M2.8 3.4L3.4 4.3L4 3.4" stroke="#cfcfcf" stroke-width="0.55" fill="none"/></svg>
<div class="t" style="left:480.0px;top:285.29999999999995px;height:9.6px;line-height:9.6px;font-size:4.8px;color:#222;font-weight:bold;">Dist.</div>
<svg class="r" style="left:505px;top:285.8px" width="5" height="5" viewBox="0 0 5 5"><path d="M1.1 4.4V0.8M0.5 1.6L1.1 0.7L1.7 1.6" stroke="#a8a8a8" stroke-width="0.55" fill="none"/><path d="M3.4 0.6V4.2M2.8 3.4L3.4 4.3L4 3.4" stroke="#cfcfcf" stroke-width="0.55" fill="none"/></svg>
<div class="t" style="left:516.0px;top:285.29999999999995px;height:9.6px;line-height:9.6px;font-size:4.8px;color:#222;font-weight:bold;">Aff.</div>
<svg class="r" style="left:539px;top:285.8px" width="5" height="5" viewBox="0 0 5 5"><path d="M1.1 4.4V0.8M0.5 1.6L1.1 0.7L1.7 1.6" stroke="#a8a8a8" stroke-width="0.55" fill="none"/><path d="M3.4 0.6V4.2M2.8 3.4L3.4 4.3L4 3.4" stroke="#cfcfcf" stroke-width="0.55" fill="none"/></svg>
<div class="t" style="left:550.0px;top:285.29999999999995px;height:9.6px;line-height:9.6px;font-size:4.8px;color:#222;font-weight:bold;">City</div>
<svg class="r" style="left:574px;top:285.8px" width="5" height="5" viewBox="0 0 5 5"><path d="M1.1 4.4V0.8M0.5 1.6L1.1 0.7L1.7 1.6" stroke="#a8a8a8" stroke-width="0.55" fill="none"/><path d="M3.4 0.6V4.2M2.8 3.4L3.4 4.3L4 3.4" stroke="#cfcfcf" stroke-width="0.55" fill="none"/></svg>
<div class="t" style="left:585.0px;top:285.29999999999995px;height:9.6px;line-height:9.6px;font-size:4.8px;color:#222;font-weight:bold;">State</div>
<svg class="r" style="left:614px;top:285.8px" width="5" height="5" viewBox="0 0 5 5"><path d="M1.1 4.4V0.8M0.5 1.6L1.1 0.7L1.7 1.6" stroke="#a8a8a8" stroke-width="0.55" fill="none"/><path d="M3.4 0.6V4.2M2.8 3.4L3.4 4.3L4 3.4" stroke="#cfcfcf" stroke-width="0.55" fill="none"/></svg>
<div class="t" style="left:625.0px;top:285.29999999999995px;height:9.6px;line-height:9.6px;font-size:4.8px;color:#222;font-weight:bold;">Revised By</div>
<svg class="r" style="left:668px;top:285.8px" width="5" height="5" viewBox="0 0 5 5"><path d="M1.1 4.4V0.8M0.5 1.6L1.1 0.7L1.7 1.6" stroke="#a8a8a8" stroke-width="0.55" fill="none"/><path d="M3.4 0.6V4.2M2.8 3.4L3.4 4.3L4 3.4" stroke="#cfcfcf" stroke-width="0.55" fill="none"/></svg>
<div class="t" style="left:679.0px;top:285.29999999999995px;height:9.6px;line-height:9.6px;font-size:4.8px;color:#222;font-weight:bold;">Revised Date</div>
<svg class="r" style="left:729px;top:285.8px" width="5" height="5" viewBox="0 0 5 5"><path d="M1.1 4.4V0.8M0.5 1.6L1.1 0.7L1.7 1.6" stroke="#a8a8a8" stroke-width="0.55" fill="none"/><path d="M3.4 0.6V4.2M2.8 3.4L3.4 4.3L4 3.4" stroke="#cfcfcf" stroke-width="0.55" fill="none"/></svg>
<div class="t" style="left:363.0px;top:300.0px;height:9.6px;line-height:9.6px;font-size:4.8px;color:#444;font-weight:normal;">No data available in table</div>
<div class="r" style="left:693px;top:320px;width:25px;height:11px;background:#fbfbfb;border:1px solid #ededed;box-sizing:border-box"></div>
<div class="t" style="left:696.5px;top:321.4px;height:9.2px;line-height:9.2px;font-size:4.6px;color:#b0b0b0;font-weight:normal;">Previous</div>
<div class="r" style="left:718px;top:320px;width:17px;height:11px;background:#fbfbfb;border:1px solid #ededed;box-sizing:border-box"></div>
<div class="t" style="left:721.8px;top:321.4px;height:9.2px;line-height:9.2px;font-size:4.6px;color:#b0b0b0;font-weight:normal;">Next</div>
<div class="t" style="left:44.5px;top:331.7px;height:11.0px;line-height:11.0px;font-size:5.5px;color:#1a62c0;font-weight:normal;-webkit-text-stroke:0.25px #1a62c0;letter-spacing:0.12px">Your New Projects</div>
<div class="t" style="left:44.5px;top:347.2px;height:9.2px;line-height:9.2px;font-size:4.6px;color:#444;font-weight:normal;">Show</div>
<div class="r" style="left:57px;top:346px;width:20px;height:10px;background:#fff;border:1px solid #e8e8e8;border-radius:2px;box-sizing:border-box"></div>
<div class="t" style="left:62px;top:348.5px;height:6.6px;line-height:6.6px;font-size:3.3px;color:#666;font-weight:normal;">10</div>
<svg class="r" style="left:69px;top:349px" width="3" height="5" viewBox="0 0 3 5"><path d="M1.5 0L2.8 2H0.2Z M1.5 5L2.8 3H0.2Z" fill="#222"/></svg>
<div class="t" style="left:78px;top:347.2px;height:9.2px;line-height:9.2px;font-size:4.6px;color:#444;font-weight:normal;">entries</div>
<div class="t" style="left:664.5px;top:347.2px;height:9.2px;line-height:9.2px;font-size:4.6px;color:#444;font-weight:normal;">Search:</div>
<div class="r" style="left:682px;top:346px;width:54px;height:10px;background:#fff;border:1px solid #e8e8e8;border-radius:2px;box-sizing:border-box"></div>
<div class="r" style="left:44px;top:361px;width:692px;height:113px;background:#f2f2f2;border:1px solid #d6d6d6;box-sizing:border-box;box-shadow:0 1px 1px rgba(0,0,0,0.12)"></div>
<div class="r" style="left:45px;top:362px;width:690px;height:15px;background:#f8f8f8;border-top:1px solid #fff;border-bottom:1px solid #fff;box-sizing:border-box"></div>
<div class="r" style="left:45px;top:377px;width:690px;height:1px;background:#d4d4d4"></div>
<div class="r" style="left:45px;top:378px;width:690px;height:18px;background:#f1f1f1"></div>
<div class="r" style="left:45px;top:396px;width:690px;height:1px;background:#e0e0e0"></div>
<div class="r" style="left:45px;top:397px;width:690px;height:18px;background:#ffffff"></div>
<div class="r" style="left:45px;top:415px;width:690px;height:1px;background:#e0e0e0"></div>
<div class="r" style="left:45px;top:416px;width:690px;height:18px;background:#f1f1f1"></div>
<div class="r" style="left:45px;top:434px;width:690px;height:1px;background:#e0e0e0"></div>
<div class="r" style="left:45px;top:435px;width:690px;height:19px;background:#ffffff"></div>
<div class="r" style="left:45px;top:454px;width:690px;height:1px;background:#e0e0e0"></div>
<div class="r" style="left:45px;top:455px;width:690px;height:18px;background:#f1f1f1"></div>
<div class="r" style="left:75px;top:362px;width:1px;height:112px;background:#dcdcdc"></div>
<div class="r" style="left:120px;top:362px;width:1px;height:112px;background:#dcdcdc"></div>
<div class="r" style="left:180px;top:362px;width:1px;height:112px;background:#dcdcdc"></div>
<div class="r" style="left:232px;top:362px;width:1px;height:112px;background:#dcdcdc"></div>
<div class="r" style="left:280px;top:362px;width:1px;height:112px;background:#dcdcdc"></div>
<div class="r" style="left:306px;top:362px;width:1px;height:112px;background:#dcdcdc"></div>
<div class="r" style="left:357px;top:362px;width:1px;height:112px;background:#dcdcdc"></div>
<div class="r" style="left:385px;top:362px;width:1px;height:112px;background:#dcdcdc"></div>
<div class="r" style="left:423px;top:362px;width:1px;height:112px;background:#dcdcdc"></div>
<div class="r" style="left:456px;top:362px;width:1px;height:112px;background:#dcdcdc"></div>
<div class="r" style="left:494px;top:362px;width:1px;height:112px;background:#dcdcdc"></div>
<div class="r" style="left:550px;top:362px;width:1px;height:112px;background:#dcdcdc"></div>
<div class="r" style="left:584px;top:362px;width:1px;height:112px;background:#dcdcdc"></div>
<div class="r" style="left:616px;top:362px;width:1px;height:112px;background:#dcdcdc"></div>
<div class="r" style="left:648px;top:362px;width:1px;height:112px;background:#dcdcdc"></div>
<div class="r" style="left:684px;top:362px;width:1px;height:112px;background:#dcdcdc"></div>
<svg class="r" style="left:69px;top:365.8px" width="5" height="5" viewBox="0 0 5 5"><path d="M1.1 4.4V0.8M0.5 1.6L1.1 0.7L1.7 1.6" stroke="#a8a8a8" stroke-width="0.55" fill="none"/><path d="M3.4 0.6V4.2M2.8 3.4L3.4 4.3L4 3.4" stroke="#cfcfcf" stroke-width="0.55" fill="none"/></svg>
<div class="t" style="left:80.0px;top:364.75px;height:9.6px;line-height:9.6px;font-size:4.8px;color:#222;font-weight:bold;">Ref Num</div>
<svg class="r" style="left:114px;top:365.8px" width="5" height="5" viewBox="0 0 5 5"><path d="M1.1 4.4V0.8M0.5 1.6L1.1 0.7L1.7 1.6" stroke="#a8a8a8" stroke-width="0.55" fill="none"/><path d="M3.4 0.6V4.2M2.8 3.4L3.4 4.3L4 3.4" stroke="#cfcfcf" stroke-width="0.55" fill="none"/></svg>
<div class="t" style="left:125.0px;top:364.75px;height:9.6px;line-height:9.6px;font-size:4.8px;color:#222;font-weight:bold;">Name</div>
<svg class="r" style="left:174px;top:365.8px" width="5" height="5" viewBox="0 0 5 5"><path d="M1.1 4.4V0.8M0.5 1.6L1.1 0.7L1.7 1.6" stroke="#a8a8a8" stroke-width="0.55" fill="none"/><path d="M3.4 0.6V4.2M2.8 3.4L3.4 4.3L4 3.4" stroke="#cfcfcf" stroke-width="0.55" fill="none"/></svg>
<div class="t" style="left:185.0px;top:364.75px;height:9.6px;line-height:9.6px;font-size:4.8px;color:#222;font-weight:bold;">Probability</div>
<svg class="r" style="left:226px;top:365.8px" width="5" height="5" viewBox="0 0 5 5"><path d="M1.1 4.4V0.8M0.5 1.6L1.1 0.7L1.7 1.6" stroke="#a8a8a8" stroke-width="0.55" fill="none"/><path d="M3.4 0.6V4.2M2.8 3.4L3.4 4.3L4 3.4" stroke="#cfcfcf" stroke-width="0.55" fill="none"/></svg>
<div class="t" style="left:237.0px;top:364.75px;height:9.6px;line-height:9.6px;font-size:4.8px;color:#222;font-weight:bold;">Condition</div>
<svg class="r" style="left:274px;top:365.8px" width="5" height="5" viewBox="0 0 5 5"><path d="M1.1 4.4V0.8M0.5 1.6L1.1 0.7L1.7 1.6" stroke="#a8a8a8" stroke-width="0.55" fill="none"/><path d="M3.4 0.6V4.2M2.8 3.4L3.4 4.3L4 3.4" stroke="#cfcfcf" stroke-width="0.55" fill="none"/></svg>
<div class="t" style="left:285.0px;top:364.75px;height:9.6px;line-height:9.6px;font-size:4.8px;color:#222;font-weight:bold;">$</div>
<svg class="r" style="left:300px;top:365.8px" width="5" height="5" viewBox="0 0 5 5"><path d="M1.1 4.4V0.8M0.5 1.6L1.1 0.7L1.7 1.6" stroke="#a8a8a8" stroke-width="0.55" fill="none"/><path d="M3.4 0.6V4.2M2.8 3.4L3.4 4.3L4 3.4" stroke="#cfcfcf" stroke-width="0.55" fill="none"/></svg>
<div class="t" style="left:311.0px;top:364.75px;height:9.6px;line-height:9.6px;font-size:4.8px;color:#222;font-weight:bold;">Last Quote</div>
<svg class="r" style="left:351px;top:365.8px" width="5" height="5" viewBox="0 0 5 5"><path d="M1.1 4.4V0.8M0.5 1.6L1.1 0.7L1.7 1.6" stroke="#a8a8a8" stroke-width="0.55" fill="none"/><path d="M3.4 0.6V4.2M2.8 3.4L3.4 4.3L4 3.4" stroke="#cfcfcf" stroke-width="0.55" fill="none"/></svg>
<div class="t" style="left:362.0px;top:364.75px;height:9.6px;line-height:9.6px;font-size:4.8px;color:#222;font-weight:bold;">SF</div>
<svg class="r" style="left:379px;top:365.8px" width="5" height="5" viewBox="0 0 5 5"><path d="M1.1 4.4V0.8M0.5 1.6L1.1 0.7L1.7 1.6" stroke="#a8a8a8" stroke-width="0.55" fill="none"/><path d="M3.4 0.6V4.2M2.8 3.4L3.4 4.3L4 3.4" stroke="#cfcfcf" stroke-width="0.55" fill="none"/></svg>
<div class="t" style="left:390.0px;top:364.75px;height:9.6px;line-height:9.6px;font-size:4.8px;color:#222;font-weight:bold;">Thru</div>
<svg class="r" style="left:417px;top:365.8px" width="5" height="5" viewBox="0 0 5 5"><path d="M1.1 4.4V0.8M0.5 1.6L1.1 0.7L1.7 1.6" stroke="#a8a8a8" stroke-width="0.55" fill="none"/><path d="M3.4 0.6V4.2M2.8 3.4L3.4 4.3L4 3.4" stroke="#cfcfcf" stroke-width="0.55" fill="none"/></svg>
<div class="t" style="left:428.0px;top:364.75px;height:9.6px;line-height:9.6px;font-size:4.8px;color:#222;font-weight:bold;">Rep</div>
<svg class="r" style="left:450px;top:365.8px" width="5" height="5" viewBox="0 0 5 5"><path d="M1.1 4.4V0.8M0.5 1.6L1.1 0.7L1.7 1.6" stroke="#a8a8a8" stroke-width="0.55" fill="none"/><path d="M3.4 0.6V4.2M2.8 3.4L3.4 4.3L4 3.4" stroke="#cfcfcf" stroke-width="0.55" fill="none"/></svg>
<div class="t" style="left:461.0px;top:364.75px;height:9.6px;line-height:9.6px;font-size:4.8px;color:#222;font-weight:bold;">Assoc.</div>
<svg class="r" style="left:488px;top:365.8px" width="5" height="5" viewBox="0 0 5 5"><path d="M1.1 4.4V0.8M0.5 1.6L1.1 0.7L1.7 1.6" stroke="#a8a8a8" stroke-width="0.55" fill="none"/><path d="M3.4 0.6V4.2M2.8 3.4L3.4 4.3L4 3.4" stroke="#cfcfcf" stroke-width="0.55" fill="none"/></svg>
<div class="t" style="left:499.0px;top:364.75px;height:9.6px;line-height:9.6px;font-size:4.8px;color:#222;font-weight:bold;">Last Contact</div>
<svg class="r" style="left:544px;top:365.8px" width="5" height="5" viewBox="0 0 5 5"><path d="M1.1 4.4V0.8M0.5 1.6L1.1 0.7L1.7 1.6" stroke="#a8a8a8" stroke-width="0.55" fill="none"/><path d="M3.4 0.6V4.2M2.8 3.4L3.4 4.3L4 3.4" stroke="#cfcfcf" stroke-width="0.55" fill="none"/></svg>
<div class="t" style="left:555.0px;top:364.75px;height:9.6px;line-height:9.6px;font-size:4.8px;color:#222;font-weight:bold;">Dist.</div>
<svg class="r" style="left:578px;top:365.8px" width="5" height="5" viewBox="0 0 5 5"><path d="M1.1 4.4V0.8M0.5 1.6L1.1 0.7L1.7 1.6" stroke="#a8a8a8" stroke-width="0.55" fill="none"/><path d="M3.4 0.6V4.2M2.8 3.4L3.4 4.3L4 3.4" stroke="#cfcfcf" stroke-width="0.55" fill="none"/></svg>
<div class="t" style="left:589.0px;top:364.75px;height:9.6px;line-height:9.6px;font-size:4.8px;color:#222;font-weight:bold;">Aff.</div>
<svg class="r" style="left:610px;top:365.8px" width="5" height="5" viewBox="0 0 5 5"><path d="M1.1 4.4V0.8M0.5 1.6L1.1 0.7L1.7 1.6" stroke="#a8a8a8" stroke-width="0.55" fill="none"/><path d="M3.4 0.6V4.2M2.8 3.4L3.4 4.3L4 3.4" stroke="#cfcfcf" stroke-width="0.55" fill="none"/></svg>
<div class="t" style="left:621.0px;top:364.75px;height:9.6px;line-height:9.6px;font-size:4.8px;color:#222;font-weight:bold;">City</div>
<svg class="r" style="left:642px;top:365.8px" width="5" height="5" viewBox="0 0 5 5"><path d="M1.1 4.4V0.8M0.5 1.6L1.1 0.7L1.7 1.6" stroke="#a8a8a8" stroke-width="0.55" fill="none"/><path d="M3.4 0.6V4.2M2.8 3.4L3.4 4.3L4 3.4" stroke="#cfcfcf" stroke-width="0.55" fill="none"/></svg>
<div class="t" style="left:653.0px;top:364.75px;height:9.6px;line-height:9.6px;font-size:4.8px;color:#222;font-weight:bold;">State</div>
<svg class="r" style="left:678px;top:365.8px" width="5" height="5" viewBox="0 0 5 5"><path d="M1.1 4.4V0.8M0.5 1.6L1.1 0.7L1.7 1.6" stroke="#a8a8a8" stroke-width="0.55" fill="none"/><path d="M3.4 0.6V4.2M2.8 3.4L3.4 4.3L4 3.4" stroke="#cfcfcf" stroke-width="0.55" fill="none"/></svg>
<div class="t" style="left:689.0px;top:364.75px;height:9.6px;line-height:9.6px;font-size:4.8px;color:#222;font-weight:bold;">Login Date</div>
<svg class="r" style="left:729px;top:365.8px" width="5" height="5" viewBox="0 0 5 5"><path d="M1.1 4.4V0.8M0.5 1.6L1.1 0.7L1.7 1.6" stroke="#a8a8a8" stroke-width="0.55" fill="none"/><path d="M3.4 0.6V4.2M2.8 3.4L3.4 4.3L4 3.4" stroke="#cfcfcf" stroke-width="0.55" fill="none"/></svg>
<div class="r" style="left:48px;top:381px;width:19px;height:12px;background:#0b5fce;border-radius:2px"></div>
<div class="t" style="left:52px;top:382.59999999999997px;height:9.2px;line-height:9.2px;font-size:4.6px;color:#fff;font-weight:bold;transform:scaleY(1.1)">View</div>
<div class="t" style="left:79.8px;top:381.2px;height:9.4px;line-height:9.4px;font-size:4.7px;color:#444;font-weight:normal;transform:scaleY(1.18)">8723</div>
<div class="t" style="left:124.8px;top:381.2px;height:9.4px;line-height:9.4px;font-size:4.7px;color:#444;font-weight:normal;transform:scaleY(1.18)">Srikant</div>
<div class="t" style="left:184.8px;top:381.2px;height:9.4px;line-height:9.4px;font-size:4.7px;color:#444;font-weight:normal;transform:scaleY(1.18)">5</div>
<div class="t" style="left:236.8px;top:381.2px;height:9.4px;line-height:9.4px;font-size:4.7px;color:#444;font-weight:normal;transform:scaleY(1.18)">Hot (30 days)</div>
<div class="t" style="left:284.8px;top:381.2px;height:9.4px;line-height:9.4px;font-size:4.7px;color:#444;font-weight:normal;transform:scaleY(1.18)">$345</div>
<div class="t" style="left:310.8px;top:381.2px;height:9.4px;line-height:9.4px;font-size:4.7px;color:#444;font-weight:normal;transform:scaleY(1.18)">04/12/2023</div>
<div class="t" style="left:361.8px;top:381.2px;height:9.4px;line-height:9.4px;font-size:4.7px;color:#444;font-weight:normal;transform:scaleY(1.18)">1,033</div>
<div class="t" style="left:389.8px;top:381.2px;height:9.4px;line-height:9.4px;font-size:4.7px;color:#444;font-weight:normal;transform:scaleY(1.18)">04/27/2023</div>
<div class="t" style="left:427.8px;top:381.2px;height:9.4px;line-height:9.4px;font-size:4.7px;color:#444;font-weight:normal;transform:scaleY(1.18)">KOL</div>
<div class="t" style="left:498.8px;top:381.2px;height:9.4px;line-height:9.4px;font-size:4.7px;color:#444;font-weight:normal;transform:scaleY(1.18)">04/12/2023</div>
<div class="t" style="left:554.8px;top:381.2px;height:9.4px;line-height:9.4px;font-size:4.7px;color:#444;font-weight:normal;transform:scaleY(1.18)">303</div>
<div class="t" style="left:588.8px;top:381.2px;height:9.4px;line-height:9.4px;font-size:4.7px;color:#444;font-weight:normal;transform:scaleY(1.18)">LE</div>
<div class="t" style="left:620.8px;top:381.2px;height:9.4px;line-height:9.4px;font-size:4.7px;color:#444;font-weight:normal;transform:scaleY(1.18)">Boston</div>
<div class="t" style="left:652.8px;top:381.2px;height:9.4px;line-height:9.4px;font-size:4.7px;color:#444;font-weight:normal;transform:scaleY(1.18)">CO</div>
<div class="t" style="left:688.8px;top:381.2px;height:9.4px;line-height:9.4px;font-size:4.7px;color:#444;font-weight:normal;transform:scaleY(1.18)">04/12/2023</div>
<div class="r" style="left:48px;top:400px;width:19px;height:12px;background:#0b5fce;border-radius:2px"></div>
<div class="t" style="left:52px;top:401.59999999999997px;height:9.2px;line-height:9.2px;font-size:4.6px;color:#fff;font-weight:bold;transform:scaleY(1.1)">View</div>
<div class="t" style="left:79.8px;top:400.2px;height:9.4px;line-height:9.4px;font-size:4.7px;color:#444;font-weight:normal;transform:scaleY(1.18)">4595</div>
<div class="t" style="left:124.8px;top:400.2px;height:9.4px;line-height:9.4px;font-size:4.7px;color:#444;font-weight:normal;transform:scaleY(1.18)">Swimow structure</div>
<div class="t" style="left:184.8px;top:400.2px;height:9.4px;line-height:9.4px;font-size:4.7px;color:#444;font-weight:normal;transform:scaleY(1.18)">5</div>
<div class="t" style="left:236.8px;top:400.2px;height:9.4px;line-height:9.4px;font-size:4.7px;color:#444;font-weight:normal;transform:scaleY(1.18)">Warm (60 days)</div>
<div class="t" style="left:427.8px;top:400.2px;height:9.4px;line-height:9.4px;font-size:4.7px;color:#444;font-weight:normal;transform:scaleY(1.18)">KOL</div>
<div class="t" style="left:498.8px;top:400.2px;height:9.4px;line-height:9.4px;font-size:4.7px;color:#444;font-weight:normal;transform:scaleY(1.18)">02/15/2023</div>
<div class="t" style="left:554.8px;top:400.2px;height:9.4px;line-height:9.4px;font-size:4.7px;color:#444;font-weight:normal;transform:scaleY(1.18)">617</div>
<div class="t" style="left:588.8px;top:400.2px;height:9.4px;line-height:9.4px;font-size:4.7px;color:#444;font-weight:normal;transform:scaleY(1.18)">AE</div>
<div class="t" style="left:620.8px;top:400.2px;height:9.4px;line-height:9.4px;font-size:4.7px;color:#444;font-weight:normal;transform:scaleY(1.18)">Boston</div>
<div class="t" style="left:652.8px;top:400.2px;height:9.4px;line-height:9.4px;font-size:4.7px;color:#444;font-weight:normal;transform:scaleY(1.18)">MA</div>
<div class="t" style="left:688.8px;top:400.2px;height:9.4px;line-height:9.4px;font-size:4.7px;color:#444;font-weight:normal;transform:scaleY(1.18)">02/15/2023</div>
<div class="r" style="left:48px;top:419px;width:19px;height:12px;background:#0b5fce;border-radius:2px"></div>
<div class="t" style="left:52px;top:420.59999999999997px;height:9.2px;line-height:9.2px;font-size:4.6px;color:#fff;font-weight:bold;transform:scaleY(1.1)">View</div>
<div class="t" style="left:79.8px;top:419.2px;height:9.4px;line-height:9.4px;font-size:4.7px;color:#444;font-weight:normal;transform:scaleY(1.18)">4596</div>
<div class="t" style="left:124.8px;top:419.2px;height:9.4px;line-height:9.4px;font-size:4.7px;color:#444;font-weight:normal;transform:scaleY(1.18)">Swimow Structure 1</div>
<div class="t" style="left:184.8px;top:419.2px;height:9.4px;line-height:9.4px;font-size:4.7px;color:#444;font-weight:normal;transform:scaleY(1.18)">5</div>
<div class="t" style="left:236.8px;top:419.2px;height:9.4px;line-height:9.4px;font-size:4.7px;color:#444;font-weight:normal;transform:scaleY(1.18)">Warm (60 days)</div>
<div class="t" style="left:427.8px;top:419.2px;height:9.4px;line-height:9.4px;font-size:4.7px;color:#444;font-weight:normal;transform:scaleY(1.18)">KOL</div>
<div class="t" style="left:498.8px;top:419.2px;height:9.4px;line-height:9.4px;font-size:4.7px;color:#444;font-weight:normal;transform:scaleY(1.18)">02/15/2023</div>
<div class="t" style="left:554.8px;top:419.2px;height:9.4px;line-height:9.4px;font-size:4.7px;color:#444;font-weight:normal;transform:scaleY(1.18)">617</div>
<div class="t" style="left:588.8px;top:419.2px;height:9.4px;line-height:9.4px;font-size:4.7px;color:#444;font-weight:normal;transform:scaleY(1.18)">AE</div>
<div class="t" style="left:620.8px;top:419.2px;height:9.4px;line-height:9.4px;font-size:4.7px;color:#444;font-weight:normal;transform:scaleY(1.18)">Boston</div>
<div class="t" style="left:652.8px;top:419.2px;height:9.4px;line-height:9.4px;font-size:4.7px;color:#444;font-weight:normal;transform:scaleY(1.18)">MA</div>
<div class="t" style="left:688.8px;top:419.2px;height:9.4px;line-height:9.4px;font-size:4.7px;color:#444;font-weight:normal;transform:scaleY(1.18)">02/15/2023</div>
<div class="r" style="left:48px;top:438px;width:19px;height:12px;background:#0b5fce;border-radius:2px"></div>
<div class="t" style="left:52px;top:439.59999999999997px;height:9.2px;line-height:9.2px;font-size:4.6px;color:#fff;font-weight:bold;transform:scaleY(1.1)">View</div>
<div class="t" style="left:79.8px;top:438.2px;height:9.4px;line-height:9.4px;font-size:4.7px;color:#444;font-weight:normal;transform:scaleY(1.18)">4590</div>
<div class="t" style="left:124.8px;top:438.2px;height:9.4px;line-height:9.4px;font-size:4.7px;color:#444;font-weight:normal;transform:scaleY(1.18)">Project name 1</div>
<div class="t" style="left:184.8px;top:438.2px;height:9.4px;line-height:9.4px;font-size:4.7px;color:#444;font-weight:normal;transform:scaleY(1.18)">2</div>
<div class="t" style="left:236.8px;top:438.2px;height:9.4px;line-height:9.4px;font-size:4.7px;color:#444;font-weight:normal;transform:scaleY(1.18)">Hot (30 days)</div>
<div class="t" style="left:427.8px;top:438.2px;height:9.4px;line-height:9.4px;font-size:4.7px;color:#444;font-weight:normal;transform:scaleY(1.18)">KOL</div>
<div class="t" style="left:498.8px;top:438.2px;height:9.4px;line-height:9.4px;font-size:4.7px;color:#444;font-weight:normal;transform:scaleY(1.18)">02/3/2023</div>
<div class="t" style="left:554.8px;top:438.2px;height:9.4px;line-height:9.4px;font-size:4.7px;color:#444;font-weight:normal;transform:scaleY(1.18)">415</div>
<div class="t" style="left:588.8px;top:438.2px;height:9.4px;line-height:9.4px;font-size:4.7px;color:#444;font-weight:normal;transform:scaleY(1.18)">AF</div>
<div class="t" style="left:620.8px;top:438.2px;height:9.4px;line-height:9.4px;font-size:4.7px;color:#444;font-weight:normal;transform:scaleY(1.18)">california</div>
<div class="t" style="left:652.8px;top:438.2px;height:9.4px;line-height:9.4px;font-size:4.7px;color:#444;font-weight:normal;transform:scaleY(1.18)">AZ</div>
<div class="t" style="left:688.8px;top:438.2px;height:9.4px;line-height:9.4px;font-size:4.7px;color:#444;font-weight:normal;transform:scaleY(1.18)">02/3/2023</div>
<div class="r" style="left:48px;top:458px;width:19px;height:12px;background:#0b5fce;border-radius:2px"></div>
<div class="t" style="left:52px;top:459.59999999999997px;height:9.2px;line-height:9.2px;font-size:4.6px;color:#fff;font-weight:bold;transform:scaleY(1.1)">View</div>
<div class="t" style="left:79.8px;top:458.2px;height:9.4px;line-height:9.4px;font-size:4.7px;color:#444;font-weight:normal;transform:scaleY(1.18)">4591</div>
<div class="t" style="left:124.8px;top:458.2px;height:9.4px;line-height:9.4px;font-size:4.7px;color:#444;font-weight:normal;transform:scaleY(1.18)">Project name 1</div>
<div class="t" style="left:184.8px;top:458.2px;height:9.4px;line-height:9.4px;font-size:4.7px;color:#444;font-weight:normal;transform:scaleY(1.18)">2</div>
<div class="t" style="left:236.8px;top:458.2px;height:9.4px;line-height:9.4px;font-size:4.7px;color:#444;font-weight:normal;transform:scaleY(1.18)">Hot (30 days)</div>
<div class="t" style="left:427.8px;top:458.2px;height:9.4px;line-height:9.4px;font-size:4.7px;color:#444;font-weight:normal;transform:scaleY(1.18)">KOL</div>
<div class="t" style="left:498.8px;top:458.2px;height:9.4px;line-height:9.4px;font-size:4.7px;color:#444;font-weight:normal;transform:scaleY(1.18)">02/3/2023</div>
<div class="t" style="left:554.8px;top:458.2px;height:9.4px;line-height:9.4px;font-size:4.7px;color:#444;font-weight:normal;transform:scaleY(1.18)">415</div>
<div class="t" style="left:588.8px;top:458.2px;height:9.4px;line-height:9.4px;font-size:4.7px;color:#444;font-weight:normal;transform:scaleY(1.18)">AF</div>
<div class="t" style="left:620.8px;top:458.2px;height:9.4px;line-height:9.4px;font-size:4.7px;color:#444;font-weight:normal;transform:scaleY(1.18)">california</div>
<div class="t" style="left:652.8px;top:458.2px;height:9.4px;line-height:9.4px;font-size:4.7px;color:#444;font-weight:normal;transform:scaleY(1.18)">AZ</div>
<div class="t" style="left:688.8px;top:458.2px;height:9.4px;line-height:9.4px;font-size:4.7px;color:#444;font-weight:normal;transform:scaleY(1.18)">02/3/2023</div>
<div class="r" style="left:682.7px;top:481px;width:24.299999999999955px;height:12px;background:#fbfbfb;border:1px solid #ededed;box-sizing:border-box"></div>
<div class="t" style="left:686.2px;top:482.9px;height:9.2px;line-height:9.2px;font-size:4.6px;color:#b0b0b0;font-weight:normal;">Previous</div>
<div class="r" style="left:707px;top:481px;width:11px;height:12px;background:#0a5fcf"></div>
<div class="t" style="left:711px;top:482.9px;height:9.2px;line-height:9.2px;font-size:4.6px;color:#fff;font-weight:bold;">1</div>
<div class="r" style="left:718px;top:481px;width:17px;height:12px;background:#fbfbfb;border:1px solid #ededed;box-sizing:border-box"></div>
<div class="t" style="left:721.8px;top:482.9px;height:9.2px;line-height:9.2px;font-size:4.6px;color:#b0b0b0;font-weight:normal;">Next</div>
</div></body></html>
